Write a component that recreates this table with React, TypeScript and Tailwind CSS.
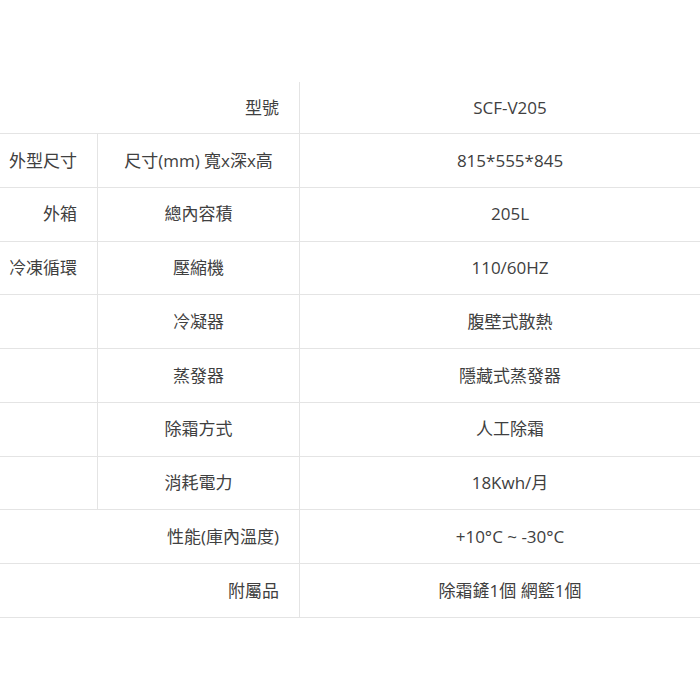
const rows: { group?: string; label: string; value: string; span?: boolean }[] = [
  { label: "型號", value: "SCF-V205", span: true },
  { group: "外型尺寸", label: "尺寸(mm) 寬x深x高", value: "815*555*845" },
  { group: "外箱", label: "總內容積", value: "205L" },
  { group: "冷凍循環", label: "壓縮機", value: "110/60HZ" },
  { label: "冷凝器", value: "腹壁式散熱" },
  { label: "蒸發器", value: "隱藏式蒸發器" },
  { label: "除霜方式", value: "人工除霜" },
  { label: "消耗電力", value: "18Kwh/月" },
  { label: "性能(庫內溫度)", value: "+10°C ~ -30°C", span: true },
  { label: "附屬品", value: "除霜鏟1個 網籃1個", span: true },
]

export default function App() {
  return (
    <div
      className="w-[700px] h-[700px] overflow-hidden bg-white pt-[82px] text-[17px] text-[#404040]"
      style={{ fontFamily: '"Open Sans", "Noto Sans CJK TC", sans-serif' }}
    >
      <div className="w-[720px]">
        {rows.map((r, i) => (
          <div
            key={r.label}
            className={`flex border-b border-[#e4e4e4] ${i === 0 ? "h-[52px]" : "h-[53.78px]"}`}
          >
            {r.span ? (
              <div className="w-[300px] flex items-center justify-end pr-5 border-r border-[#e4e4e4]">
                {r.label}
              </div>
            ) : (
              <>
                <div className="w-[98px] flex items-center justify-end pr-5 border-r border-[#e4e4e4]">
                  {r.group}
                </div>
                <div className="w-[202px] flex items-center justify-center border-r border-[#e4e4e4]">
                  {r.label}
                </div>
              </>
            )}
            <div className="w-[420px] flex items-center justify-center">{r.value}</div>
          </div>
        ))}
      </div>
    </div>
  )
}
